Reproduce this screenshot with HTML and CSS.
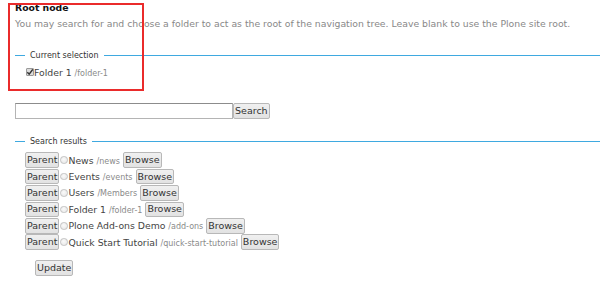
FILE: index.html
```html
<!DOCTYPE html>
<html lang="en">
<head>
  <meta charset="UTF-8">
  <title>Root node</title>
  <link rel="stylesheet" href="styles.css">
</head>
<body>

  <div class="field">
    <div class="field-label">Root node</div>
    <div class="help">You may search for and choose a folder to act as the root of the navigation tree. Leave blank to use the Plone site root.</div>

    <!-- Current selection -->
    <fieldset class="group current">
      <legend>Current selection</legend>
      <div class="choice">
        <input type="checkbox" class="check" checked>
        <label>Folder 1 <span class="path">/folder-1</span></label>
      </div>
    </fieldset>

    <div class="search-row">
      <input type="text" class="query"><button class="btn">Search</button>
    </div>

    <!-- Search results -->
    <fieldset class="group results">
      <legend>Search results</legend>
      <div class="result-row"><button class="btn">Parent</button><input type="radio" class="radio" name="root"><label>News <span class="path">/news</span></label><button class="btn browse">Browse</button></div>
      <div class="result-row"><button class="btn">Parent</button><input type="radio" class="radio" name="root"><label>Events <span class="path">/events</span></label><button class="btn browse">Browse</button></div>
      <div class="result-row"><button class="btn">Parent</button><input type="radio" class="radio" name="root"><label>Users <span class="path">/Members</span></label><button class="btn browse">Browse</button></div>
      <div class="result-row"><button class="btn">Parent</button><input type="radio" class="radio" name="root"><label>Folder 1 <span class="path">/folder-1</span></label><button class="btn browse">Browse</button></div>
      <div class="result-row"><button class="btn">Parent</button><input type="radio" class="radio" name="root"><label>Plone Add-ons Demo <span class="path">/add-ons</span></label><button class="btn browse">Browse</button></div>
      <div class="result-row"><button class="btn">Parent</button><input type="radio" class="radio" name="root"><label>Quick Start Tutorial <span class="path">/quick-start-tutorial</span></label><button class="btn browse">Browse</button></div>
    </fieldset>

    <div class="actions">
      <button class="btn">Update</button>
    </div>
  </div>

  <!-- highlight box drawn over the field -->
  <div class="highlight"></div>

</body>
</html>
```

FILE: styles.css
```css
* {
  box-sizing: border-box;
}

body {
  margin: 0;
  padding: 0 0 0 15px;
  font-family: 'DejaVu Sans', sans-serif;
  font-size: 9.3px;
  color: #444;
  background: #fff;
  position: relative;
  overflow: hidden;
}

.field-label {
  font-weight: bold;
  font-size: 9.3px;
  color: #111;
  line-height: 12px;
  margin-top: 2px;
}

.help {
  font-size: 9.3px;
  color: #888;
  line-height: 12px;
  margin-top: 4px;
  white-space: nowrap;
}

/* Fieldsets: only a top rule broken by the legend */
.group {
  margin: 0;
  border: none;
  padding: 0 0 0 10px;
  min-width: 0;
}

.group legend {
  display: flex;
  align-items: center;
  width: calc(100% + 10px);
  margin-left: -10px;
  padding: 0;
  font-size: 8px;
  color: #333;
  line-height: 11px;
}

.group legend::before {
  content: "";
  width: 10px;
  height: 1px;
  margin-right: 5px;
  background: #3fa9e0;
}

.group legend::after {
  content: "";
  flex: 1;
  height: 1px;
  margin-left: 5px;
  background: #3fa9e0;
}

.current {
  margin-top: 20px;
}

.choice {
  display: flex;
  align-items: center;
  height: 16px;
  margin-top: 3px;
  padding-left: 1px;
}

.check {
  -webkit-appearance: none;
  appearance: none;
  width: 8px;
  height: 8px;
  margin: 0;
  border: 1px solid #9a9a9a;
  border-radius: 1px;
  background: #ddd url("data:image/svg+xml,%3Csvg xmlns='http://www.w3.org/2000/svg' viewBox='0 0 8 8'%3E%3Cpath d='M1.3 4.2 L3.2 6.2 L6.8 1.4' fill='none' stroke='%23333' stroke-width='1.5'/%3E%3C/svg%3E") center / 8px 8px no-repeat;
}

.path {
  font-size: 8px;
  color: #8a8a8a;
}

.search-row {
  display: flex;
  margin-top: 23px;
  height: 16px;
}

.query {
  width: 218px;
  height: 16px;
  margin: 0;
  border: 1px solid #b4b4b4;
  border-top-color: #8c8c8c;
  background: #fff;
  padding: 0 2px;
}

.btn {
  font-family: 'DejaVu Sans', sans-serif;
  font-size: 9.5px;
  color: #333;
  height: 15.5px;
  line-height: 12px;
  padding: 0 1px;
  margin: 0;
  border: 1px solid #b8b8b8;
  border-radius: 2px;
  background: linear-gradient(#f0f0f0, #e2e2e2);
}

.results {
  margin-top: 17px;
}

.results legend {
  margin-bottom: 5px;
}

.result-row {
  display: flex;
  align-items: center;
  height: 16.4px;
  white-space: nowrap;
}

.result-row .browse {
  margin-left: 3px;
}

.radio {
  -webkit-appearance: none;
  appearance: none;
  width: 7.5px;
  height: 7.5px;
  margin: 0 0.5px 0 1px;
  border: 1px solid #c2c2c2;
  border-radius: 50%;
  background: radial-gradient(circle at 45% 40%, #fafafa, #e4e4e4);
}

.actions {
  padding-left: 20px;
  margin-top: 10px;
}

.actions .btn {
  height: 16px;
}

/* Red annotation box */
.highlight {
  position: absolute;
  left: 8px;
  top: 3px;
  width: 136px;
  height: 88px;
  border: 2px solid #ea2b2b;
  pointer-events: none;
}
```
